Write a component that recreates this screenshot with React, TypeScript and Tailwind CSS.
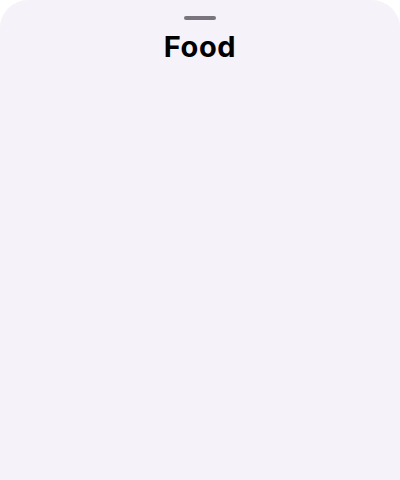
export default function App() {
  return (
    <div className="w-[400px] h-[480px] bg-white">
      <div className="w-full h-full bg-[#f6f2f9] rounded-t-[28px] flex flex-col items-center">
        <div className="mt-[16px] w-[32px] h-[4px] rounded-full bg-[#79747e]" />
        <div
          className="mt-[9px] text-[29px] leading-[36px] font-bold text-black tracking-[0.6px]"
          style={{ fontFamily: "Inter, 'Noto Sans', sans-serif" }}
        >
          Food
        </div>
      </div>
    </div>
  );
}
